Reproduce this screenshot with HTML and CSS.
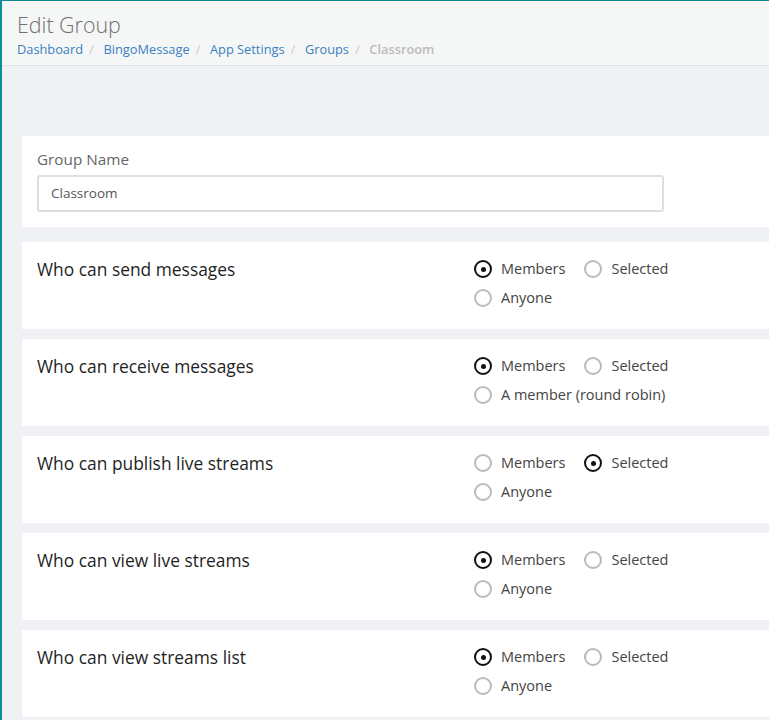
FILE: index.html
```html
<!DOCTYPE html>
<html>
<head>
<meta charset="utf-8">
<link rel="stylesheet" href="styles.css">
</head>
<body>
<div class="app">
  <div class="rail"></div>
  <div class="main">
    <header class="page-head">
      <h1 class="title">Edit Group</h1>
      <nav class="crumbs">
        <a class="crumb">Dashboard</a><span class="sep">/</span>
        <a class="crumb">BingoMessage</a><span class="sep">/</span>
        <a class="crumb">App Settings</a><span class="sep">/</span>
        <a class="crumb">Groups</a><span class="sep">/</span>
        <span class="crumb current">Classroom</span>
      </nav>
    </header>
    <div class="content">
      <section class="card name-card">
        <label class="field-label">Group Name</label>
        <div class="input">Classroom</div>
      </section>

      <section class="card row">
        <div class="row-title">Who can send messages</div>
        <div class="radios">
          <span class="opt"><span class="radio on"></span>Members</span>
          <span class="opt"><span class="radio"></span>Selected</span>
          <span class="opt"><span class="radio"></span>Anyone</span>
        </div>
      </section>

      <section class="card row">
        <div class="row-title">Who can receive messages</div>
        <div class="radios">
          <span class="opt"><span class="radio on"></span>Members</span>
          <span class="opt"><span class="radio"></span>Selected</span>
          <span class="opt"><span class="radio"></span>A member (round robin)</span>
        </div>
      </section>

      <section class="card row">
        <div class="row-title">Who can publish live streams</div>
        <div class="radios">
          <span class="opt"><span class="radio"></span>Members</span>
          <span class="opt"><span class="radio on"></span>Selected</span>
          <span class="opt"><span class="radio"></span>Anyone</span>
        </div>
      </section>

      <section class="card row">
        <div class="row-title">Who can view live streams</div>
        <div class="radios">
          <span class="opt"><span class="radio on"></span>Members</span>
          <span class="opt"><span class="radio"></span>Selected</span>
          <span class="opt"><span class="radio"></span>Anyone</span>
        </div>
      </section>

      <section class="card row">
        <div class="row-title">Who can view streams list</div>
        <div class="radios">
          <span class="opt"><span class="radio on"></span>Members</span>
          <span class="opt"><span class="radio"></span>Selected</span>
          <span class="opt"><span class="radio"></span>Anyone</span>
        </div>
      </section>
    </div>
  </div>
</div>
</body>
</html>
```

FILE: styles.css
```css
* { box-sizing: border-box; }
html, body {
  margin: 0;
  padding: 0;
  overflow: hidden;
  height: 720px;
}
body {
  font-family: "Open Sans", "Liberation Sans", sans-serif;
  background: #eff1f5;
  color: #222;
}
.app {
  display: flex;
  min-height: 720px;
  width: 900px;
  border-top: 1px solid #0e8a8c;
}
.rail {
  width: 2px;
  flex: none;
  background: #0e8f90;
}
.main {
  flex: 1;
}
.page-head {
  height: 65px;
  background: #f5f7f6;
  border-bottom: 1px solid #dfe2e4;
  padding: 11px 0 0 15px;
}
.title {
  margin: 0;
  font-weight: 300;
  font-size: 21.4px;
  line-height: 26px;
  color: #6f6f6f;
}
.crumbs {
  margin-top: 2px;
  font-size: 12.8px;
  line-height: 18px;
}
.crumb { color: #3a7fc1; }
.crumb.current { color: #bbbbbb; font-weight: 600; }
.sep { color: #cccccc; padding: 0 6.2px; }

.content {
  padding: 70px 0 0 20px;
  display: flex;
  flex-direction: column;
  gap: 10px;
}
.card {
  background: #fff;
}
.name-card {
  height: 91px;
  padding: 13px 15px 0 15px;
  margin-bottom: 5px;
}
.field-label {
  display: block;
  font-size: 15.3px;
  line-height: 20px;
  color: #666;
  margin-bottom: 6px;
}
.input {
  width: 627px;
  height: 37px;
  border: 2px solid #dedede;
  border-radius: 3px;
  padding: 0 12px;
  font-size: 13.5px;
  line-height: 33px;
  color: #555;
}
.row {
  height: 87px;
  display: grid;
  grid-template-columns: 437px 215px;
  padding: 15px 0 0 15px;
}
.row-title {
  font-size: 17.4px;
  line-height: 24px;
  color: #1f1f1f;
}
.radios {
  display: flex;
  flex-wrap: wrap;
  column-gap: 19px;
  row-gap: 7px;
  align-content: flex-start;
  padding-top: 1px;
}
.opt {
  display: inline-flex;
  align-items: center;
  gap: 9px;
  font-size: 14.5px;
  line-height: 22px;
  color: #444;
}
.radio {
  width: 18px;
  height: 18px;
  border-radius: 50%;
  border: 2px solid #bbbbbb;
  display: inline-flex;
  align-items: center;
  justify-content: center;
}
.radio.on {
  border-color: #111;
}
.radio.on::after {
  content: "";
  width: 5px;
  height: 5px;
  border-radius: 50%;
  background: #111;
}
```
